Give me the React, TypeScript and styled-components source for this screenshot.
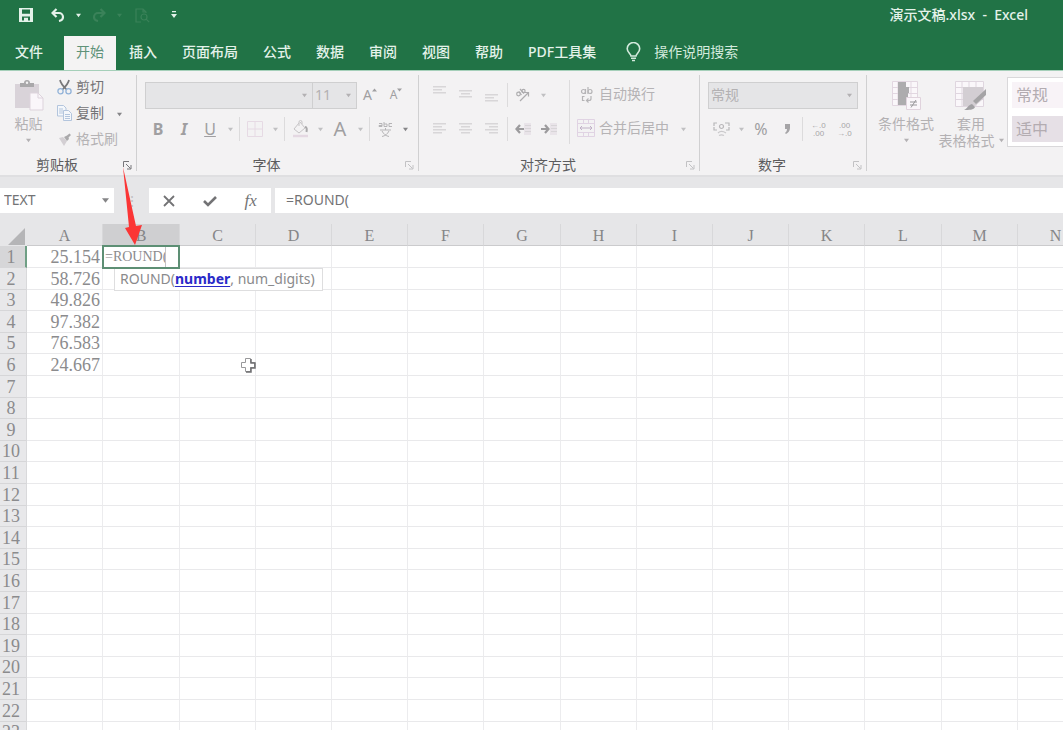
import React from 'react';
import styled, { createGlobalStyle } from 'styled-components';

const uiFont = '"Noto Sans", "Noto Sans CJK SC", sans-serif';
const sheetFont = '"Liberation Serif", "Noto Sans CJK SC", serif';

const GlobalStyle = createGlobalStyle`
  * { box-sizing: border-box; }
  body { margin: 0; overflow: hidden; }
  button, input, select { font: inherit; color: inherit; margin: 0; }
`;

const Window = styled.div`
  position: relative;
  display: flex;
  flex-direction: column;
  height: 100vh;
  overflow: hidden;
  background: #e6e6e8;
  font-family: ${uiFont};
  font-size: 14px;
  line-height: 20px;
`;

/* ---------- title bar ---------- */

const TitleBar = styled.header`
  display: flex;
  flex: none;
  align-items: center;
  justify-content: space-between;
  height: 36px;
  padding: 0 35px 6px 10px;
  background: #217346;
  color: #e4f2ea;
`;

const QuickAccess = styled.div`
  display: flex;
  align-items: center;
  gap: 1px;
`;

const SplitButton = styled.div`
  display: flex;
`;

const QuickButton = styled.button<{ $width: number; $dim?: boolean }>`
  display: flex;
  align-items: center;
  justify-content: center;
  width: ${(p) => p.$width}px;
  height: 20px;
  padding: 0;
  border: 0;
  background: none;
  color: ${(p) => (p.$dim ? '#3a8259' : '#e4f2ea')};
`;

const DocTitle = styled.h1`
  margin: 0;
  font-size: 14px;
  font-weight: 500;
  white-space: pre;
`;

/* ---------- tabs ---------- */

const TabBar = styled.nav`
  display: flex;
  flex: none;
  gap: 1px;
  height: 35px;
  padding-left: 3px;
  border-bottom: 1px solid #a5cfb9;
  background: #217346;
`;

const Tab = styled.button<{ $active?: boolean; $first?: boolean }>`
  height: 34px;
  margin-right: ${(p) => (p.$first ? 8 : 0)}px;
  padding: 0 12px 2px;
  border: 0;
  background: ${(p) => (p.$active ? '#f4f3f3' : 'none')};
  color: ${(p) => (p.$active ? '#5f9279' : '#e4f2ea')};
  font-weight: ${(p) => (p.$active ? 400 : 500)};
  white-space: nowrap;
`;

const TellMe = styled.button`
  display: flex;
  align-items: center;
  gap: 13px;
  height: 34px;
  margin-left: 17px;
  padding: 0 0 2px;
  border: 0;
  background: none;
  color: #d3eadd;
  white-space: nowrap;
`;

/* ---------- ribbon ---------- */

const Ribbon = styled.section`
  display: flex;
  flex: none;
  height: 104px;
  padding: 4px 0 0;
  background: #f3f2f3;
  color: #b3b1b3;
  overflow: hidden;
`;

const Group = styled.div<{ $width: number }>`
  display: flex;
  flex: none;
  flex-direction: column;
  justify-content: space-between;
  width: ${(p) => p.$width}px;
  height: 96px;
  border-right: 1px solid #d0d0d1;
`;

const GroupFooter = styled.div`
  display: grid;
  grid-template-columns: 2px 1fr 24px;
  align-items: center;
  height: 16px;
  color: #5c5c5e;
  text-align: center;
`;

const GroupTitle = styled.span`
  grid-column: 2;
`;

const Launcher = styled.button<{ $dark?: boolean }>`
  display: flex;
  justify-content: center;
  padding: 0 0 0 6px;
  border: 0;
  background: none;
  color: ${(p) => (p.$dark ? '#77777a' : '#c2c2c4')};
`;

const GroupBody = styled.div<{ $left?: number }>`
  display: flex;
  padding: 0 0 0 ${(p) => p.$left ?? 8}px;
`;

const Stack = styled.div`
  display: flex;
  flex-direction: column;
  gap: 8px;
  padding-top: 7px;
`;

const ToolRow = styled.div`
  display: flex;
  align-items: center;
  height: 26px;
`;

const ToolButton = styled.button<{ $size?: number; $bold?: boolean; $italic?: boolean }>`
  display: flex;
  align-items: center;
  justify-content: center;
  width: 26px;
  height: 26px;
  padding: 0;
  border: 0;
  background: none;
  color: #a09fa1;
  font-size: ${(p) => p.$size ?? 16}px;
  font-weight: ${(p) => (p.$bold ? 700 : 400)};
  font-style: ${(p) => (p.$italic ? 'italic' : 'normal')};
`;

const SizeMark = styled.span`
  display: flex;
  align-self: flex-start;
  padding-top: 6px;
`;

const CaretButton = styled.button<{ $width?: number; $dark?: boolean }>`
  display: flex;
  align-items: center;
  justify-content: center;
  width: ${(p) => p.$width ?? 14}px;
  height: 20px;
  padding: 0;
  border: 0;
  background: none;
  color: ${(p) => (p.$dark ? '#858587' : '#c0c0c2')};
`;

const Divider = styled.span<{ $tall?: boolean }>`
  flex: none;
  width: 1px;
  height: ${(p) => (p.$tall ? 64 : 24)}px;
  margin: ${(p) => (p.$tall ? '5px 7px 0' : '0 2px')};
  background: #dcdbdc;
`;

const BigButton = styled.button<{ $width: number }>`
  display: flex;
  flex: none;
  flex-direction: column;
  align-items: center;
  width: ${(p) => p.$width}px;
  padding: 5px 0 0;
  border: 0;
  background: none;
  color: #b3b1b3;
  line-height: 17px;
  white-space: nowrap;
`;

const BigLabel = styled.span`
  margin: 4px 0 0;
`;

const CaretLine = styled.span`
  display: flex;
  align-items: center;
  height: 17px;
  gap: 4px;
`;

const ClipStack = styled.div`
  display: flex;
  flex-direction: column;
`;

const TextButton = styled.button<{ $dark?: boolean }>`
  display: flex;
  align-items: center;
  gap: 4px;
  height: 26px;
  padding: 0 0 2px;
  border: 0;
  background: none;
  color: ${(p) => (p.$dark ? '#737375' : '#b5b3b5')};
  white-space: nowrap;
`;

const IconSlot = styled.span`
  display: flex;
  justify-content: center;
  width: 18px;
`;

const Picker = styled.div<{ $width: number }>`
  position: relative;
  display: flex;
  align-items: center;
  width: ${(p) => p.$width}px;
  height: 27px;
  margin-left: ${(p) => (p.$width < 60 ? -1 : 0)}px;
  border: 1px solid #cfcfd0;
  background: #e5e5e7;

  select {
    width: 100%;
    height: 25px;
    padding: 0 2px;
    border: 0;
    background: none;
    appearance: none;
    outline: none;
  }
  svg {
    position: absolute;
    right: 5px;
  }
`;

const Gallery = styled.div`
  display: flex;
  flex: 1 0 56px;
  flex-direction: column;
  gap: 8px;
  height: 70px;
  margin: 2px 0 0 10px;
  padding: 4px 0 4px 4px;
  border: 1px solid #d9d8da;
  border-right: 0;
  background: #fff;
`;

const StyleSwatch = styled.button<{ $shade: string }>`
  height: 26px;
  padding: 0 4px;
  border: 0;
  background: ${(p) => p.$shade};
  color: #b3acb1;
  font-size: 16px;
  line-height: 24px;
  text-align: left;
  white-space: nowrap;
`;

/* ---------- formula bar ---------- */

const FormulaBar = styled.section`
  display: flex;
  flex: none;
  align-items: center;
  height: 49px;
  border-top: 2px solid #dfdfe1;
  color: #737375;
`;

const NameBox = styled.div`
  display: flex;
  align-items: center;
  width: 114px;
  height: 25px;
  padding: 0 2px 0 4px;
  background: #fff;

  input {
    flex: 1;
    min-width: 0;
    padding: 0 0 2px;
    border: 0;
    outline: none;
    background: none;
  }
`;

const Grip = styled.span`
  width: 35px;
  color: #c0c0c2;
  text-align: center;
`;

const EditButtons = styled.div`
  display: flex;
  width: 122px;
  height: 25px;
  background: #fff;
`;

const EditButton = styled.button`
  display: flex;
  flex: 1;
  align-items: center;
  justify-content: center;
  padding: 0;
  border: 0;
  background: none;
  font: italic 17px "Liberation Serif", serif;
`;

const FormulaInput = styled.input`
  flex: 1;
  min-width: 0;
  height: 25px;
  margin-left: 4px !important;
  padding: 0 11px 2px;
  border: 0;
  outline: none;
  background: #fff;
`;

/* ---------- sheet ---------- */

const SheetArea = styled.main`
  position: relative;
  flex: 1;
  overflow: hidden;
  background: #fff;
`;

const Sheet = styled.table`
  width: 1094px;
  border-collapse: separate;
  border-spacing: 0;
  table-layout: fixed;
  color: #8b8b8d;
  font-family: ${sheetFont};
  font-size: 18px;
  line-height: 20px;

  col { width: 76px; }
  col:nth-child(5n + 3) { width: 77px; }
  col:first-child { width: 27px; }

  tbody tr { height: 22px; }
  tbody tr:nth-child(5n + 3), tbody tr:nth-child(5n) { height: 21px; }
`;

const ColumnHeader = styled.th<{ $active?: boolean }>`
  height: 22px;
  padding: 2px 0 0;
  border-right: 1px solid #d8d8da;
  border-bottom: 1px solid #cbcbcd;
  background: ${(p) => (p.$active ? '#cfcfd1' : '#e6e6e8')};
  color: #858587;
  font-size: 16px;
  font-weight: 400;
  line-height: 19px;
`;

const Corner = styled.td`
  height: 22px;
  padding: 0;
  background: #e6e6e8;

  svg { display: block; margin: 2px 0 0 8px; }
`;

const RowHeader = styled.th<{ $active?: boolean }>`
  padding: 0 ${(p) => (p.$active ? 3 : 4)}px 0 0;
  border-right: ${(p) => (p.$active ? '2px solid #6f9f85' : '1px solid #d9d9db')};
  border-bottom: 1px solid #d6d6d8;
  background: ${(p) => (p.$active ? '#d6d6d8' : '#e8e8ea')};
  font-weight: 400;
  line-height: 18px;
`;

const Cell = styled.td`
  position: relative;
  padding: 0 2px 0 0;
  border-right: 1px solid #ececee;
  border-bottom: 1px solid #e9e9eb;
  line-height: 18px;
  text-align: right;
`;

const CellEditor = styled.div`
  position: absolute;
  z-index: 2;
  top: -1px;
  left: -1px;
  width: 78px;
  height: 24px;
  border: 2px solid #5d8f74;
  background: #fff;

  input {
    display: block;
    width: 62px;
    height: 20px;
    padding: 0 0 0 1px;
    border: 0;
    border-right: 1px solid #c4c4c6;
    outline: none;
    font-size: 14px;
  }
`;

const Hint = styled.div`
  position: absolute;
  z-index: 1;
  top: 22px;
  left: 11px;
  height: 23px;
  padding: 0 7px 2px 5px;
  border: 1px solid #dededf;
  background: #fff;
  color: #8a8a8c;
  font-family: ${uiFont};
  font-size: 14px;
  line-height: 19px;
  white-space: nowrap;

  a { color: #2a2ac8; font-weight: 700; text-underline-offset: 2px; }
`;

const PlusCursor = styled.svg`
  position: absolute;
  top: 132px;
  left: 239px;
`;

const Pointer = styled.svg`
  position: absolute;
  z-index: 5;
  top: 167px;
  left: 120px;
  pointer-events: none;
`;

/* ---------- icons ---------- */

const Caret = ({ size = 5 }: { size?: number }) => (
  <svg width={size} height={size} viewBox="0 0 6 6" aria-hidden="true">
    <path d="M0 1h6L3 5z" fill="currentColor" />
  </svg>
);

const SizeCaret = ({ up }: { up?: boolean }) => (
  <svg width="5" height="4" viewBox="0 0 5 4" aria-hidden="true">
    <path d={up ? 'M0 3.500h5L2.500.500z' : 'M0 .500h5L2.500 3.500z'} fill="currentColor" />
  </svg>
);

const SaveIcon = () => (
  <svg width="14" height="14" viewBox="0 0 14 14">
    <path fillRule="evenodd" fill="currentColor" d="M0 0h14v14H0zM3 1.5v4.3h8V1.5zM3 8.5v4h2v-2.8h4v2.8h2v-4z" />
    <path d="M5.3 10h1.6v2.5H5.3z" fill="currentColor" />
  </svg>
);

const UndoIcon = ({ flip }: { flip?: boolean }) => (
  <svg width="14" height="14" viewBox="0 0 14 14">
    <g transform={flip ? 'translate(14 0) scale(-1 1)' : undefined} fill="none" stroke="currentColor" strokeWidth="2.200">
      <path d="M5.500 1 1.500 5l4 4" />
      <path d="M2 5h6a4 4 0 0 1 4 4c0 2-1.500 3.500-4 4" />
    </g>
  </svg>
);

const PreviewIcon = () => (
  <svg width="15" height="15" viewBox="0 0 15 15" fill="none" stroke="currentColor" strokeWidth="1.200">
    <path d="M6 14H1V1h7l3 3v1M8 1v3h3" />
    <circle cx="9" cy="9" r="3" />
    <path d="m11.200 11.200 3 3" />
  </svg>
);

const CustomizeIcon = () => (
  <svg width="6" height="8" viewBox="0 0 6 8">
    <path d="M1 0h4v1.200H1zM0 3h6L3 7z" fill="currentColor" />
  </svg>
);

const BulbIcon = () => (
  <svg width="15" height="20" viewBox="0 0 15 20" fill="none" stroke="currentColor" strokeWidth="1.600">
    <path d="M5 14c0-2-3.800-3.500-3.800-7.200a6.200 6.200 0 0 1 12.500 0C13.700 10.500 10 12 10 14z" />
    <path d="M5 16.300h5M6 18.500h3" />
  </svg>
);

const LauncherIcon = () => (
  <svg width="9" height="9" viewBox="0 0 9 9" fill="none" stroke="currentColor">
    <path d="M.5 6V.5H6M3 3l4.500 4.500M8 4v4H4" />
  </svg>
);

const PasteIcon = () => (
  <svg width="30" height="31" viewBox="0 0 30 31">
    <path d="M1 4h24v24H1z" fill="#d9d3d9" />
    <path d="M6 3h4a3 3 0 0 1 6 0h4v4H6z" fill="#a9a8aa" />
    <circle cx="13" cy="2.800" r="1.200" fill="#f3f2f3" />
    <path d="M16 13h8l5 5v12H16z" fill="#faf6fa" stroke="#ddd3dc" />
    <path d="M24 13v5h5" fill="none" stroke="#ddd3dc" />
  </svg>
);

const ScissorsIcon = () => (
  <svg width="15" height="16" viewBox="0 0 15 16" fill="none">
    <path d="M3 1c.500 3 3 6 6.500 9.500M12 1c-.500 3-3 6-6.500 9.500" stroke="#77777a" strokeWidth="1.700" />
    <circle cx="3.500" cy="12.300" r="2.600" stroke="#91b2d8" strokeWidth="1.300" />
    <circle cx="11.500" cy="12.300" r="2.600" stroke="#91b2d8" strokeWidth="1.300" />
  </svg>
);

const CopyIcon = () => (
  <svg width="15" height="16" viewBox="0 0 15 16" fill="#f4f7fb" stroke="#b3c5dd">
    <path d="M.5.500h6l2.500 2.500v8H.5z" />
    <path d="M2 4h4M2 6h4M2 8h4" />
    <path d="M6.500 5.500h5l3 3v7h-8z" />
    <path d="M8 9.500h5M8 11.500h5M8 13.500h5" />
  </svg>
);

const BrushIcon = () => (
  <svg width="15" height="15" viewBox="0 0 15 15">
    <path d="m2 6 4-1 4 4-3 5z" fill="#d3cfd3" />
    <path d="m7 5 3 4 2-2-.500-1.500L14 3l-1.500-1.500-2.500 2z" fill="#aaa9ab" />
  </svg>
);

const BorderIcon = () => (
  <svg width="16" height="16" viewBox="0 0 16 16" fill="none" stroke="#e6dae4">
    <path d="M.5.500h15v15H.5zM8 1v14M1 8h14" />
  </svg>
);

const FillIcon = () => (
  <svg width="17" height="18" viewBox="0 0 17 18" fill="none" stroke="#c6c4c6">
    <path d="m7 3-5 6 5 4 6-5-5-6M7 6V2a1.500 1.500 0 0 1 3 0v2" />
    <path d="M13 7c2 0 2 2 1.500 5" stroke="#aaa9ab" strokeWidth="2" />
    <path d="M1 16h15" stroke="#e4d8e2" strokeWidth="2.500" />
  </svg>
);

const PhoneticIcon = () => (
  <svg width="15" height="16" viewBox="0 0 15 16" fill="none" stroke="#b5b4b6">
    <path d="M1 2.500h3v3H1v-1h3M6 1v4.500h3V3H6M14 2.500h-3v3h3" />
    <path d="M2 9h11M7.500 7v2M4 10c1.500 3 4 5 7 5.500M11 10c-1.500 3-4 5-7 5.500" />
  </svg>
);

const LinesIcon = ({ align, offset }: { align: 'left' | 'center' | 'right'; offset: number }) => {
  const widths = offset === 0 ? [13, 9, 13, 9] : [13, 9, 13];
  return (
    <svg width="14" height="18" viewBox="0 0 14 18" fill="#d8d6d8">
      {widths.map((w, i) => {
        const x = align === 'left' ? 0 : align === 'right' ? 13 - w : (13 - w) / 2;
        return <rect key={i} x={x} y={offset + 3 + i * 3} width={w} height="1.500" />;
      })}
    </svg>
  );
};

const OrientationIcon = () => (
  <svg width="16" height="16" viewBox="0 0 16 16" fill="none" stroke="#adacae" strokeWidth="1.200">
    <path d="m5 14 8-8M9.500 5.500H13.500v4" />
    <circle cx="3.500" cy="7" r="1.800" />
    <path d="M4 4.500 6.500 8M5 2l4 4.500" />
    <circle cx="8.500" cy="4" r="1.600" />
  </svg>
);

const IndentIcon = ({ right }: { right?: boolean }) => (
  <svg width="17" height="14" viewBox="0 0 17 14">
    <path d="M9 1h7v12H9z" fill="#e9e4e9" />
    <path d="M10 3.500h6M10 6.500h6M10 9.500h6" stroke="#d8d5d8" />
    <path
      d="M1 7h8M5 3 1.500 7 5 11"
      transform={right ? 'translate(9 0) scale(-1 1)' : undefined}
      fill="none"
      stroke="#9c9b9d"
      strokeWidth="2.200"
    />
  </svg>
);

const WrapIcon = () => (
  <svg width="13" height="17" viewBox="0 0 13 17" fill="none" stroke="#b5b4b6" strokeWidth="1.200">
    <circle cx="3.500" cy="5.500" r="2" />
    <path d="M5.500 3v5M8 1v7" />
    <circle cx="10" cy="5.500" r="2" />
    <path d="M4.500 10.500H2.500v4h2M11 10v2.500a2 2 0 0 1-2 2H7M8.500 12.500l-2 2 2 2" />
  </svg>
);

const MergeIcon = () => (
  <svg width="18" height="18" viewBox="0 0 18 18" fill="none" stroke="#e0d3e3">
    <path d="M.5.500h17v17H.5zM1 4.500h16M1 13.500h16M6.500 1v3M11.500 1v3M6.500 14v3M11.500 14v3" />
    <path d="M3 9h12M5 7 3 9l2 2M13 7l2 2-2 2" stroke="#c0b1c6" />
  </svg>
);

const CurrencyIcon = () => (
  <svg width="17" height="15" viewBox="0 0 17 15" fill="none" stroke="#b8b7b9" strokeWidth="1.200">
    <path d="M4 1H1v3M1 5v3h3M12 1h4v3M16 5v3h-3" />
    <circle cx="8.500" cy="4.500" r="2" />
    <path d="M5 11c2-2 5-2 8 0M6 13.500c2-1 3-1 5 0" stroke="#cac9cb" />
  </svg>
);

const CommaIcon = () => (
  <svg width="7" height="10" viewBox="0 0 7 10">
    <path d="M1 0h5v4c0 3-2 5-4 6l-1-1c1-1 2-2 2-4H1z" fill="#a5a4a6" />
  </svg>
);

const Tiny = styled.text`
  font-family: "Liberation Sans", sans-serif;
  font-size: 8px;
  fill: #a6a5a7;
`;

const DecimalIcon = ({ more }: { more?: boolean }) => (
  <svg width="15" height="16" viewBox="0 0 15 16">
    {more ? <Tiny x="0" y="7">←.0</Tiny> : <Tiny x="2" y="7">.00</Tiny>}
    {more ? <Tiny x="2" y="15">.00</Tiny> : <Tiny x="0" y="15">→.0</Tiny>}
  </svg>
);

const ConditionalIcon = () => (
  <svg width="30" height="31" viewBox="0 0 30 31">
    <path d="M1.500 1.500h25v24h-25zM7 1v24M20 1v24M1 7.500h26M1 13.500h26M1 19.500h26" fill="#faf7fa" stroke="#e2d7e1" />
    <path d="M7 2h8v5h3v6h-1v7h-2v5H7z" fill="#adacae" />
    <path d="M15.500 17.500h14v12h-14z" fill="#faf6fa" stroke="#e0d3dd" />
    <path d="M19 22h7M19 25h7M25 20l-5 7.500" stroke="#98979a" />
  </svg>
);

const TableFormatIcon = () => (
  <svg width="34" height="31" viewBox="0 0 34 31">
    <path d="M1.500 1.500h28v25h-28zM8 1v25M15 1v25M22 1v25M1 7.500h28M1 13.500h28M1 19.500h28" fill="#faf7fa" stroke="#dfd6df" />
    <path d="M9 7h20v12l-8 7H9z" fill="#d3ced3" />
    <path d="M32 9v6L22 24l-3-3z" fill="#a5a4a6" />
    <path d="M10 30c3-1 4-5 8-6l3 3c-1 3-6 3-11 3z" fill="#a2a1a4" />
  </svg>
);

/* ---------- data ---------- */

const tabs = ['文件', '开始', '插入', '页面布局', '公式', '数据', '审阅', '视图', '帮助', 'PDF工具集'];
const columns = 'ABCDEFGHIJKLMN'.split('');
const values = ['25.154', '58.726', '49.826', '97.382', '76.583', '24.667'];
const rows = Array.from({ length: 24 }, (_, i) => i + 1);

function Footer({ title, dark }: { title: string; dark?: boolean }) {
  return (
    <GroupFooter>
      <GroupTitle>{title}</GroupTitle>
      <Launcher $dark={dark} aria-label={title}>
        <LauncherIcon />
      </Launcher>
    </GroupFooter>
  );
}

function ClipboardGroup() {
  return (
    <Group $width={137}>
      <GroupBody $left={0}>
        <BigButton $width={57}>
          <PasteIcon />
          <BigLabel>粘贴</BigLabel>
          <CaretLine><Caret /></CaretLine>
        </BigButton>
        <ClipStack>
          <TextButton $dark><ScissorsIcon />剪切</TextButton>
          <ToolRow>
            <TextButton $dark><CopyIcon />复制</TextButton>
            <CaretButton $width={30} $dark aria-label="复制"><Caret /></CaretButton>
          </ToolRow>
          <TextButton><BrushIcon />格式刷</TextButton>
        </ClipStack>
      </GroupBody>
      <Footer title="剪贴板" dark />
    </Group>
  );
}

function FontGroup() {
  return (
    <Group $width={282}>
      <GroupBody>
        <Stack>
          <ToolRow>
            <Picker $width={168}>
              <select aria-label="字体"><option /></select>
              <Caret />
            </Picker>
            <Picker $width={45}>
              <select aria-label="字号" defaultValue="11"><option>11</option></select>
              <Caret />
            </Picker>
            <ToolButton $size={14} aria-label="增大字号">A<SizeMark><SizeCaret up /></SizeMark></ToolButton>
            <ToolButton $size={12} aria-label="减小字号">A<SizeMark><SizeCaret /></SizeMark></ToolButton>
          </ToolRow>
          <ToolRow>
            <ToolButton $bold aria-label="加粗">B</ToolButton>
            <ToolButton $italic $bold aria-label="倾斜">I</ToolButton>
            <ToolButton aria-label="下划线"><u>U</u></ToolButton>
            <CaretButton aria-label="下划线样式"><Caret /></CaretButton>
            <Divider />
            <ToolButton aria-label="边框"><BorderIcon /></ToolButton>
            <CaretButton aria-label="边框样式"><Caret /></CaretButton>
            <Divider />
            <ToolButton aria-label="填充"><FillIcon /></ToolButton>
            <CaretButton aria-label="填充颜色"><Caret /></CaretButton>
            <ToolButton $size={20} aria-label="字体颜色">A</ToolButton>
            <CaretButton aria-label="更多颜色"><Caret /></CaretButton>
            <Divider />
            <ToolButton aria-label="拼音"><PhoneticIcon /></ToolButton>
            <CaretButton $dark aria-label="拼音设置"><Caret /></CaretButton>
          </ToolRow>
        </Stack>
      </GroupBody>
      <Footer title="字体" />
    </Group>
  );
}

function AlignmentGroup() {
  return (
    <Group $width={281}>
      <GroupBody>
        <Stack>
          <ToolRow>
            <ToolButton aria-label="顶端对齐"><LinesIcon align="left" offset={-3} /></ToolButton>
            <ToolButton aria-label="垂直居中"><LinesIcon align="center" offset={1} /></ToolButton>
            <ToolButton aria-label="底端对齐"><LinesIcon align="left" offset={5} /></ToolButton>
            <Divider />
            <ToolButton aria-label="方向"><OrientationIcon /></ToolButton>
            <CaretButton aria-label="方向选项"><Caret /></CaretButton>
          </ToolRow>
          <ToolRow>
            <ToolButton aria-label="左对齐"><LinesIcon align="left" offset={0} /></ToolButton>
            <ToolButton aria-label="居中"><LinesIcon align="center" offset={0} /></ToolButton>
            <ToolButton aria-label="右对齐"><LinesIcon align="right" offset={0} /></ToolButton>
            <Divider />
            <ToolButton aria-label="减少缩进"><IndentIcon /></ToolButton>
            <ToolButton aria-label="增加缩进"><IndentIcon right /></ToolButton>
          </ToolRow>
        </Stack>
        <Divider $tall />
        <Stack>
          <TextButton><IconSlot><WrapIcon /></IconSlot>自动换行</TextButton>
          <ToolRow>
            <TextButton><IconSlot><MergeIcon /></IconSlot>合并后居中</TextButton>
            <CaretButton $width={28} aria-label="合并选项"><Caret /></CaretButton>
          </ToolRow>
        </Stack>
      </GroupBody>
      <Footer title="对齐方式" />
    </Group>
  );
}

function NumberGroup() {
  return (
    <Group $width={167}>
      <GroupBody>
        <Stack>
          <ToolRow>
            <Picker $width={150}>
              <select aria-label="数字格式" defaultValue="常规"><option>常规</option></select>
              <Caret />
            </Picker>
          </ToolRow>
          <ToolRow>
            <ToolButton aria-label="会计格式"><CurrencyIcon /></ToolButton>
            <CaretButton aria-label="货币"><Caret /></CaretButton>
            <ToolButton>%</ToolButton>
            <ToolButton aria-label="千位分隔"><CommaIcon /></ToolButton>
            <Divider />
            <ToolButton aria-label="增加小数位"><DecimalIcon more /></ToolButton>
            <ToolButton aria-label="减少小数位"><DecimalIcon /></ToolButton>
          </ToolRow>
        </Stack>
      </GroupBody>
      <Footer title="数字" />
    </Group>
  );
}

export default function App() {
  return (
    <Window>
      <GlobalStyle />
      <TitleBar>
        <QuickAccess>
          <QuickButton $width={32} aria-label="保存"><SaveIcon /></QuickButton>
          <SplitButton>
            <QuickButton $width={30} aria-label="撤消"><UndoIcon /></QuickButton>
            <QuickButton $width={10} aria-label="撤消列表"><Caret /></QuickButton>
          </SplitButton>
          <SplitButton>
            <QuickButton $width={30} $dim aria-label="恢复"><UndoIcon flip /></QuickButton>
            <QuickButton $width={10} $dim aria-label="恢复列表"><Caret /></QuickButton>
          </SplitButton>
          <QuickButton $width={34} $dim aria-label="打印预览"><PreviewIcon /></QuickButton>
          <QuickButton $width={28} aria-label="自定义"><CustomizeIcon /></QuickButton>
        </QuickAccess>
        <DocTitle>{'演示文稿.xlsx  -  Excel'}</DocTitle>
      </TitleBar>

      <TabBar>
        {tabs.map((name, i) => (
          <Tab key={name} $active={i === 1} $first={i === 0}>{name}</Tab>
        ))}
        <TellMe><BulbIcon />操作说明搜索</TellMe>
      </TabBar>

      <Ribbon>
        <ClipboardGroup />
        <FontGroup />
        <AlignmentGroup />
        <NumberGroup />
        <BigButton $width={78}>
          <ConditionalIcon />
          <BigLabel>条件格式</BigLabel>
          <CaretLine><Caret /></CaretLine>
        </BigButton>
        <BigButton $width={52}>
          <TableFormatIcon />
          <BigLabel>套用</BigLabel>
          <CaretLine>表格格式<Caret /></CaretLine>
        </BigButton>
        <Gallery>
          <StyleSwatch $shade="#f8f3f7">常规</StyleSwatch>
          <StyleSwatch $shade="#e6e0e6">适中</StyleSwatch>
        </Gallery>
      </Ribbon>

      <FormulaBar>
        <NameBox>
          <input aria-label="名称框" defaultValue="TEXT" />
          <CaretButton aria-label="名称列表" $dark><Caret size={7} /></CaretButton>
        </NameBox>
        <Grip>⋮</Grip>
        <EditButtons>
          <EditButton aria-label="取消">
            <svg width="12" height="12" viewBox="0 0 12 12"><path d="m1 1 10 10M11 1 1 11" stroke="currentColor" strokeWidth="1.800" /></svg>
          </EditButton>
          <EditButton aria-label="输入">
            <svg width="14" height="12" viewBox="0 0 14 12"><path d="m1 6 4 4 8-8" fill="none" stroke="currentColor" strokeWidth="2.600" /></svg>
          </EditButton>
          <EditButton>fx</EditButton>
        </EditButtons>
        <FormulaInput aria-label="编辑栏" defaultValue="=ROUND(" />
      </FormulaBar>

      <SheetArea>
        <Sheet>
          <colgroup>
            <col />
            {columns.map((c) => <col key={c} />)}
          </colgroup>
          <thead>
            <tr>
              <Corner>
                <svg width="17" height="17" viewBox="0 0 17 17"><path d="M17 0v17H0z" fill="#b5b5b7" /></svg>
              </Corner>
              {columns.map((c) => (
                <ColumnHeader key={c} scope="col" $active={c === 'B'}>{c}</ColumnHeader>
              ))}
            </tr>
          </thead>
          <tbody>
            {rows.map((r) => (
              <tr key={r}>
                <RowHeader scope="row" $active={r === 1}>{r}</RowHeader>
                {columns.map((c) => (
                  <Cell key={c}>
                    {c === 'A' && values[r - 1]}
                    {c === 'B' && r === 1 && (
                      <>
                        <CellEditor><input aria-label="B1" defaultValue="=ROUND(" /></CellEditor>
                        <Hint>ROUND(<a href="#number">number</a>, num_digits)</Hint>
                      </>
                    )}
                  </Cell>
                ))}
              </tr>
            ))}
          </tbody>
        </Sheet>
        <PlusCursor width="18" height="18" viewBox="0 0 18 18">
          <path d="M6.500 2.500h5v4h4v5h-4v4h-5v-4h-4v-5h4z" fill="#fff" stroke="#98989a" />
          <path d="M12 3v4h4v5h-4v4H7" fill="none" stroke="#6f6f71" strokeWidth="1.500" />
        </PlusCursor>
      </SheetArea>

      <Pointer width="24" height="80" viewBox="0 0 24 80">
        <path d="M3 0 16 59l6-1-7 20L5 61l4-1z" fill="#fb3535" />
      </Pointer>
    </Window>
  );
}
